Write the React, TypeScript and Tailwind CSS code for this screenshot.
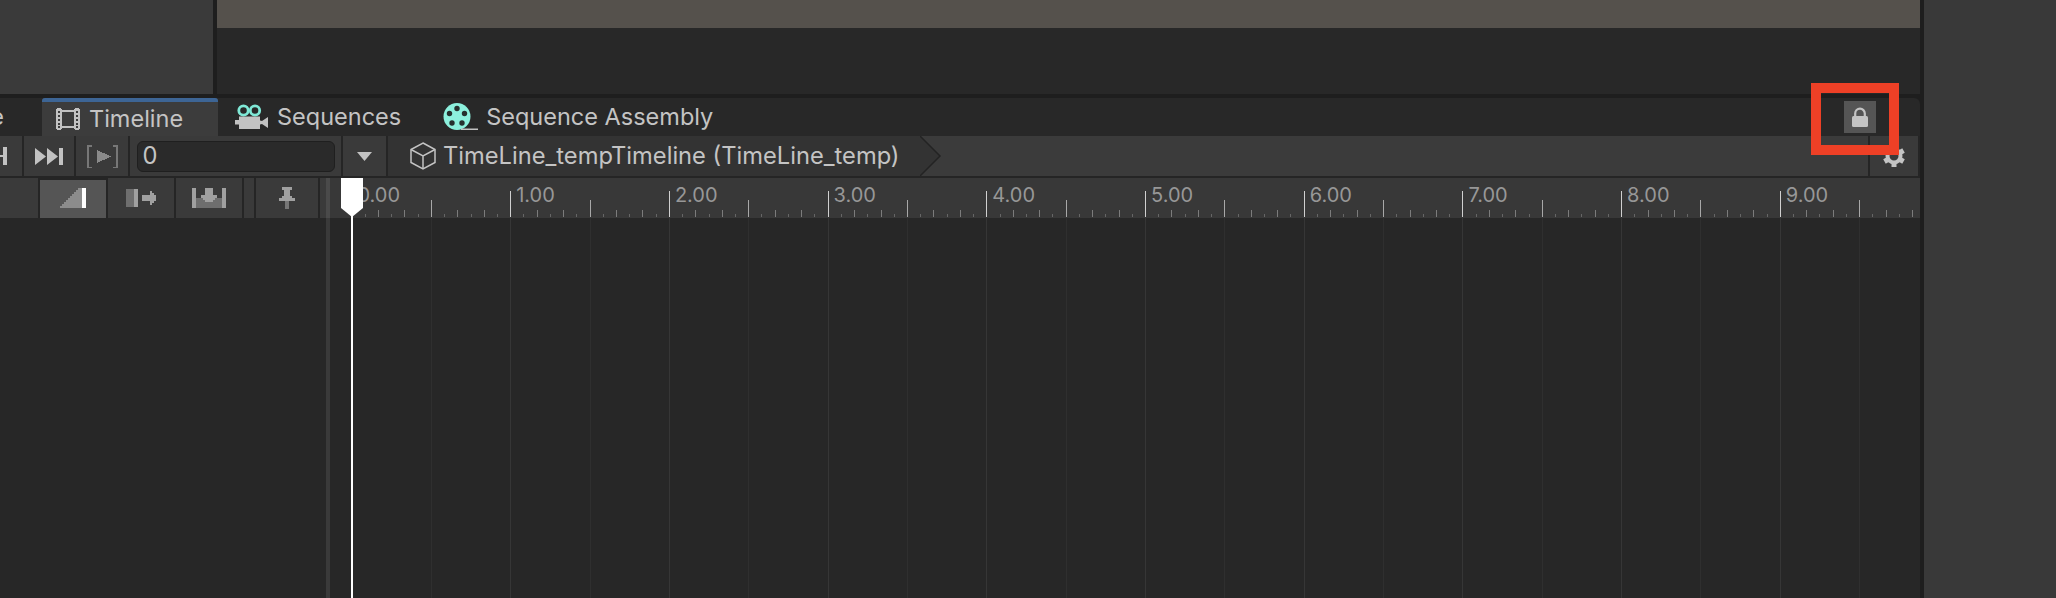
import React from 'react';

const TICK = 158.7 / 12;
const X0 = 21.5;

const ticks = Array.from({ length: 122 }, (_, i) => i);

const Ruler = () => (
  <svg width="1590" height="40" className="block" shapeRendering="crispEdges">
    {ticks.map((i) => {
      const x = Math.round(X0 + i * TICK) + 0.5;
      if (x > 1590) return null;
      let top = 36;
      let color = '#666666';
      if (i % 12 === 0) { top = 13; color = '#d0d0d0'; }
      else if (i % 6 === 0) { top = 22; color = '#a8a8a8'; }
      else if (i % 2 === 0) { top = 32; color = '#7c7c7c'; }
      return <line key={i} x1={x} x2={x} y1={top} y2={39} stroke={color} />;
    })}
    {Array.from({ length: 10 }, (_, n) => (
      <text key={n} x={X0 + n * 158.7 + 6} y={23.5} fill="#979797" fontSize="20" fontFamily="Inter, sans-serif">
        {n}.00
      </text>
    ))}
  </svg>
);

const Grid = () => (
  <svg width="1590" height="380" className="block" shapeRendering="crispEdges">
    {Array.from({ length: 21 }, (_, n) => {
      const x = Math.round(X0 + n * 79.35) + 0.5;
      return <line key={n} x1={x} x2={x} y1={0} y2={380} stroke={n % 2 === 0 ? '#363636' : '#2f2f2f'} />;
    })}
  </svg>
);

const FilmIcon = () => (
  <svg width="24" height="22" viewBox="0 0 24 22" shapeRendering="crispEdges">
    <path fill="#c2c2c2" fillRule="evenodd" d="M0 1h1V0h4v1h1v20H5v1H1v-1H0zM2 3v2h2V3zM2 7v2h2V7zM2 11v2h2v-2zM2 15v2h2v-2zM2 18v2h2v-2z" />
    <path fill="#c2c2c2" fillRule="evenodd" d="M18 1h1V0h4v1h1v20h-1v1h-4v-1h-1zM20 3v2h2V3zM20 7v2h2V7zM20 11v2h2v-2zM20 15v2h2v-2zM20 18v2h2v-2z" />
    <rect x="6" y="2" width="12" height="2" fill="#c2c2c2" />
    <rect x="6" y="18" width="12" height="2" fill="#c2c2c2" />
  </svg>
);

const CameraIcon = () => (
  <svg width="36" height="26" viewBox="0 0 36 26">
    <circle cx="8.500" cy="6.500" r="4.700" fill="none" stroke="#7fe8d6" strokeWidth="2.800" />
    <circle cx="20" cy="6.500" r="4.700" fill="none" stroke="#7fe8d6" strokeWidth="2.800" />
    <path fill="#c2c2c2" d="M4 12.500h21v4l2 .5 6-4v11l-6-4-2 .5v4.500H4v-4.500H0V16h4z" />
  </svg>
);

const ReelIcon = () => (
  <svg width="36" height="28" viewBox="0 0 36 28">
    <circle cx="14" cy="13.500" r="13.500" fill="#8cf0dd" />
    <rect x="18" y="25.500" width="17" height="1.500" fill="#c2c2c2" />
    <g fill="#26302e">
      <circle cx="14" cy="5.500" r="2.700" />
      <circle cx="6.500" cy="10.500" r="2.700" />
      <circle cx="21.500" cy="10.500" r="2.700" />
      <circle cx="9" cy="20" r="2.700" />
      <circle cx="19" cy="20" r="2.700" />
    </g>
  </svg>
);

const Divider = () => <div className="w-[2px] shrink-0 bg-[#252525]" />;

export default function App() {
  return (
    <div className="relative flex h-[598px] w-[2056px] overflow-hidden bg-[#1e1e1e] font-['Inter',sans-serif] text-[#c4c4c4]">
      <div className="flex w-[1920px] shrink-0 flex-col">
        {/* scene view above */}
        <div className="flex h-[94px] shrink-0">
          <div className="w-[213px] bg-[#3a3a3a]" />
          <div className="w-[4px] bg-[#1e1e1e]" />
          <div className="flex flex-1 flex-col bg-[#282828]">
            <div className="h-[28px] bg-[#55514c]" />
          </div>
        </div>
        <div className="h-[4px] shrink-0 bg-[#1e1e1e]" />

        {/* tab bar */}
        <div className="flex h-[38px] shrink-0 items-stretch rounded-tr-md bg-[#282828] text-[23.5px] leading-none">
          <div className="flex w-[42px] items-center justify-end overflow-hidden pr-[38px] whitespace-nowrap">Scene</div>
          <div className="flex w-[176px] flex-col overflow-hidden rounded-t-[3px] bg-[#3c3c3c]">
            <div className="h-[4px] bg-[#3d6595]" />
            <div className="flex flex-1 items-center pl-[14px]">
              <FilmIcon />
              <span className="ml-[9px]">Timeline</span>
            </div>
          </div>
          <div className="flex items-center pl-[17px]">
            <CameraIcon />
            <span className="ml-[6px]">Sequences</span>
          </div>
          <div className="flex items-center pl-[42px]">
            <ReelIcon />
            <span className="ml-[7px]">Sequence Assembly</span>
          </div>
          <div className="ml-auto mr-[44px] flex items-center">
            <div className="flex h-[32px] w-[32px] items-center justify-center bg-[#555555]">
              <svg width="16" height="20" viewBox="0 0 16 20">
                <path d="M3.200 10V6.500a4.800 4.800 0 0 1 9.600 0V10" fill="none" stroke="#c4c4c4" strokeWidth="2.200" />
                <rect x="0" y="9" width="16" height="11" rx="1.500" fill="#c4c4c4" />
              </svg>
            </div>
          </div>
        </div>

        {/* transport and breadcrumb */}
        <div className="flex h-[40px] shrink-0 bg-[#252525] pr-[2px]">
          <div className="flex w-[22px] items-center bg-[#3a3a3a]">
            <svg width="8" height="20" viewBox="0 0 8 20">
              <path fill="#c2c2c2" d="M3 1h4v18H3zM0 9h3v2H0z" />
            </svg>
          </div>
          <Divider />
          <div className="flex w-[50px] items-center justify-center bg-[#3a3a3a]">
            <svg width="28" height="17" viewBox="0 0 28 17">
              <path fill="#c2c2c2" d="M0 0l11 8.500L0 17zM12 0l11 8.500L12 17zM24 0h4v17h-4z" />
            </svg>
          </div>
          <Divider />
          <div className="flex w-[52px] items-center justify-center bg-[#3a3a3a]">
            <svg width="31" height="23" viewBox="0 0 31 23" shapeRendering="crispEdges">
              <path fill="#777777" d="M0 0h5v1.500H2V21.500h3V23H0zM31 0h-5v1.500h3V21.500h-3V23h5z" />
              <path fill="#8a8a8a" d="M10 5l14 6.500L10 18z" />
            </svg>
          </div>
          <Divider />
          <div className="flex w-[211px] items-center justify-center bg-[#3a3a3a]">
            <div className="flex h-[31px] w-[198px] items-center rounded-md border border-[#1f1f1f] bg-[#2a2a2a] pl-[5px] text-[23.7px]">0</div>
          </div>
          <Divider />
          <div className="flex w-[43px] items-center justify-center bg-[#3a3a3a]">
            <svg width="15" height="9" viewBox="0 0 15 9">
              <path fill="#c2c2c2" d="M0 0h15L7.500 9z" />
            </svg>
          </div>
          <Divider />
          <div className="flex w-[532px] items-center bg-[#333333] pl-[22px] text-[23.7px] whitespace-nowrap">
            <svg width="26" height="28" viewBox="0 0 26 28" fill="none" stroke="#c4c4c4" strokeWidth="1.500">
              <path d="M13 1L25 7.500V20.500L13 27L1 20.500V7.500Z" />
              <path d="M1 7.500L13 14L25 7.500M13 14V27" />
            </svg>
            <span className="ml-[7px]">TimeLine_tempTimeline (TimeLine_temp)</span>
          </div>
          <svg width="22" height="40" viewBox="0 0 22 40" className="shrink-0">
            <rect width="22" height="40" fill="#3b3b3b" />
            <path d="M0 0L20 20L0 40Z" fill="#333333" />
            <path d="M0 0L20 20L0 40" fill="none" stroke="#232323" strokeWidth="1.500" />
          </svg>
          <div className="flex-1 bg-[#3b3b3b]" />
          <Divider />
          <div className="flex w-[48px] items-center justify-center bg-[#3a3a3a]">
            <svg width="22" height="22" viewBox="0 0 22 22">
              <circle cx="11" cy="11" r="6.500" fill="none" stroke="#c4c4c4" strokeWidth="4" />
              <g fill="#c4c4c4">
                <rect x="8.500" y="0" width="5" height="4" />
                <rect x="8.500" y="18" width="5" height="4" />
                <rect x="8.500" y="0" width="5" height="4" transform="rotate(60 11 11)" />
                <rect x="8.500" y="0" width="5" height="4" transform="rotate(120 11 11)" />
                <rect x="8.500" y="0" width="5" height="4" transform="rotate(240 11 11)" />
                <rect x="8.500" y="0" width="5" height="4" transform="rotate(300 11 11)" />
              </g>
            </svg>
          </div>
        </div>
        <div className="h-[2px] shrink-0 bg-[#252525]" />

        {/* clip edit tools and ruler */}
        <div className="flex h-[40px] shrink-0 bg-[#252525]">
          <div className="w-[38px] bg-[#3a3a3a]" />
          <Divider />
          <div className="mt-[2px] flex w-[66px] items-center justify-center bg-[#555555]">
            <svg width="26" height="20" viewBox="0 0 26 20" shapeRendering="crispEdges" className="-mt-[2px]">
              <path fill="#8c8c8c" d="M0 20V18h2v-2h2v-2h2v-2h2v-2h2V8h2V6h2V4h2V2h2V0h4v20z" />
              <rect x="22" y="0" width="4" height="20" fill="#ffffff" />
            </svg>
          </div>
          <Divider />
          <div className="flex w-[66px] items-center justify-center bg-[#3a3a3a]">
            <svg width="30" height="18" viewBox="0 0 30 18" shapeRendering="crispEdges">
              <rect x="0" y="0" width="8" height="18" fill="#6e6e6e" />
              <rect x="8" y="0" width="4" height="18" fill="#a0a0a0" />
              <path fill="#a0a0a0" d="M16 6h8V2h2v2h2v2h2v6h-2v2h-2v2h-2v-4h-8z" />
            </svg>
          </div>
          <Divider />
          <div className="flex w-[66px] items-center justify-center bg-[#3a3a3a]">
            <svg width="34" height="20" viewBox="0 0 34 20" shapeRendering="crispEdges">
              <rect x="0" y="0" width="4" height="20" fill="#a0a0a0" />
              <rect x="30" y="0" width="4" height="20" fill="#a0a0a0" />
              <rect x="4" y="10" width="26" height="10" fill="#6e6e6e" />
              <path fill="#a0a0a0" d="M13 0h8v7h4v3h-2v2h-2v2h-8v-2h-2v-2H9V7h4z" />
            </svg>
          </div>
          <Divider />
          <div className="w-[10px] bg-[#3a3a3a]" />
          <Divider />
          <div className="flex w-[62px] items-center justify-center bg-[#3a3a3a]">
            <svg width="16" height="22" viewBox="0 0 16 22" shapeRendering="crispEdges">
              <path fill="#a0a0a0" d="M3 0h10v3h-2v6h2v2h3v3H0v-3h3V9h2V3H3z" />
              <rect x="6" y="14" width="4" height="8" fill="#777777" />
            </svg>
          </div>
          <Divider />
          <div className="w-[6px] bg-[#3a3a3a]" />
          <div className="w-[4px] bg-[#4a4a4a]" />
          <div className="flex-1 overflow-hidden bg-[#383838]">
            <Ruler />
          </div>
        </div>

        {/* track area */}
        <div className="flex flex-1 bg-[#272727]">
          <div className="w-[326px] shrink-0" />
          <div className="w-[4px] shrink-0 bg-[#3a3a3a]" />
          <div className="flex-1 overflow-hidden">
            <Grid />
          </div>
        </div>
      </div>

      <div className="w-[4px] shrink-0 bg-[#1e1e1e]" />
      <div className="flex-1 bg-[#393939]" />

      {/* playhead */}
      <svg width="22" height="420" viewBox="0 0 22 420" className="absolute left-[341px] top-[178px]">
        <path d="M0 0H22V30L11 39L0 30Z" fill="#ffffff" />
        <rect x="10" y="30" width="2" height="390" fill="#ffffff" />
      </svg>

      {/* annotation frame */}
      <div className="absolute left-[1811px] top-[83px] h-[72px] w-[88px] border-[10px] border-[#ee4026]" />
    </div>
  );
}
